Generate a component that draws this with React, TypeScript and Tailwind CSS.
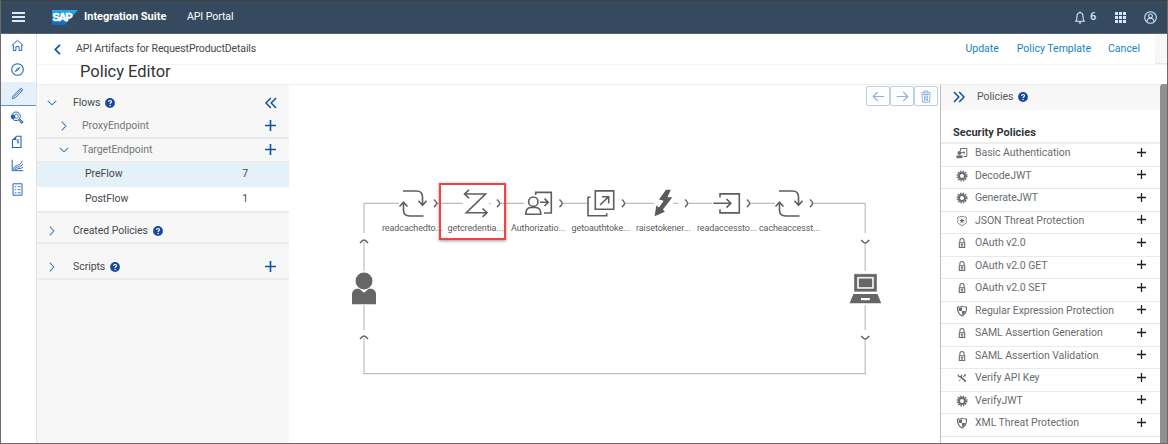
import React from "react";

type P = { className?: string };

const Svg = ({ className = "", box, children }: { className?: string; box: string; children: React.ReactNode }) => (
  <svg viewBox={box} className={className} fill="none" stroke="currentColor" strokeLinecap="butt" strokeLinejoin="miter">
    {children}
  </svg>
);

/* ---------- Shell icons ---------- */

const SapLogo = () => (
  <svg viewBox="0 0 26 15" className="h-[15px] w-[26px] shrink-0">
    <defs>
      <linearGradient id="sap" x1="0" y1="0" x2="0" y2="1">
        <stop offset="0" stopColor="#1fb0ea" />
        <stop offset="1" stopColor="#1a62bd" />
      </linearGradient>
    </defs>
    <polygon points="0,0 26,0 13,15 0,15" fill="url(#sap)" />
    <text x="0.4" y="11.3" fontFamily="Liberation Sans, Arial, sans-serif" fontWeight="700" fontSize="11" letterSpacing="-1.200" fill="#fff" stroke="#fff" strokeWidth="0.5">
      SAP
    </text>
  </svg>
);

const Bell = () => (
  <Svg box="0 0 12 13" className="h-[13px] w-[12px]">
    <path d="M1 10.2h10M2.2 10c.8-1.3.8-2.6.8-4.6C3 3.2 4.2 1.8 6 1.8S9 3.2 9 5.4c0 2 0 3.300.8 4.600M6 .4v1.400M4.800 11.900h2.400" strokeWidth="1.1" />
  </Svg>
);

const Apps = () => (
  <svg viewBox="0 0 11 11" className="h-[11px] w-[11px]" fill="currentColor">
    {[0, 4, 8].map((y) => [0, 4, 8].map((x) => <rect key={`${x}-${y}`} x={x} y={y} width="3" height="3" />))}
  </svg>
);

const User = () => (
  <Svg box="0 0 13 13" className="h-[13px] w-[13px]">
    <circle cx="6.5" cy="6.5" r="5.800" strokeWidth="1.1" />
    <circle cx="6.5" cy="4.900" r="1.900" strokeWidth="1.1" />
    <path d="M3 10.800c.2-2.500 1.600-3.600 3.500-3.600s3.300 1.100 3.500 3.600" strokeWidth="1.1" />
  </Svg>
);

const Home = () => (
  <Svg box="0 0 13 13" className="h-[13px] w-[13px]">
    <path d="M.7 6.600 6.500 1.300l5.800 5.300M2.300 5.800v5.700h2.600V7.600h3.200v3.900h2.600V5.800" strokeWidth="1" />
  </Svg>
);

const Compass = () => (
  <Svg box="0 0 13 13" className="h-[13px] w-[13px]">
    <circle cx="6.5" cy="6.5" r="5.800" strokeWidth="1.1" />
    <path d="M9.700 3.600 7.300 7.200 3.300 9.400 5.700 5.800z" fill="currentColor" stroke="none" />
    <path d="m6 6.100 1 .8" stroke="#fff" strokeWidth=".6" />
  </Svg>
);

const Pencil = () => (
  <Svg box="0 0 13 13" className="h-[13px] w-[13px]">
    <path d="m1.300 11.700.9-3L8.900 2l2.100 2.100-6.700 6.700zM7.700 3.200l2.100 2.100M9.400 1.600l.7-.5 1.900 1.900-.6.7M3 9.800l5.400-5.300" strokeWidth=".85" />
  </Svg>
);

const KeySearch = () => (
  <Svg box="0 0 14 14" className="h-[14px] w-[14px]">
    <circle cx="6" cy="5.300" r="4.300" strokeWidth="1" />
    <circle cx="6.300" cy="5.300" r="2" strokeWidth=".8" />
    <circle cx="3.100" cy="5.800" r="2.300" fill="currentColor" stroke="none" />
    <path d="m8.600 8.800 3 3.500 1.300-1.300-3.300-3.100" strokeWidth="1.100" />
  </Svg>
);

const DocMoney = () => (
  <Svg box="0 0 12 14" className="h-[14px] w-[12px]">
    <path d="M1.500 4.500V12.500h8.500V1.200H5" strokeWidth="1.1" />
    <path d="M1 5 5.300.700V5z" fill="currentColor" stroke="none" />
    <path d="M7.900 5.300c-.5-.5-2-.5-2 .4 0 1 2 .5 2 1.500 0 .9-1.500.9-2 .3M6.900 4.400v4" strokeWidth=".7" />
  </Svg>
);

const Chart = () => (
  <Svg box="0 0 13 13" className="h-[13px] w-[13px]">
    <path d="M1.200.800v10.900h11" strokeWidth="1" />
    <path d="M2 9.500 6.200 6.200l2.300-.4 3-4M2.300 10.700l4-2.700 2.500-.2 3.200-2.600M4 11l3-1.400h2.200l2.600-1.300" strokeWidth=".9" />
  </Svg>
);

const ListDoc = () => (
  <Svg box="0 0 11 13" className="h-[13px] w-[11px]">
    <path d="M1 .8h9v11.400H1z" strokeWidth="1" />
    <path d="M2.700 3.500l.6.600 1-1.200M2.700 6.500l.6.600 1-1.200M2.700 9.600l.6.600 1-1.200M5.800 3.700h2.700M5.800 6.700h2.700M5.800 9.800h2.700" strokeWidth=".9" />
  </Svg>
);

/* ---------- Small shared icons ---------- */

const ChevDown = ({ className = "" }: P) => (
  <Svg box="0 0 10 6" className={`h-[6px] w-[10px] ${className}`}>
    <path d="m.8.800 4.200 4 4.200-4" strokeWidth="1.1" />
  </Svg>
);
const ChevRight = ({ className = "" }: P) => (
  <Svg box="0 0 6 10" className={`h-[10px] w-[6px] ${className}`}>
    <path d="m.8.600 4 4.400-4 4.400" strokeWidth="1.1" />
  </Svg>
);
const DoubleChev = ({ className = "" }: P) => (
  <Svg box="0 0 12 12" className={`h-[12px] w-[12px] ${className}`}>
    <path d="M5.800.9 1 6l4.800 5.100M11 .9 6.200 6l4.800 5.100" strokeWidth="1.500" />
  </Svg>
);
const Plus = ({ className = "" }: P) => (
  <Svg box="0 0 11 11" className={className}>
    <path d="M5.500 0v11M0 5.500h11" strokeWidth="1.600" />
  </Svg>
);
const Help = () => (
  <svg viewBox="0 0 10 10" className="h-[10px] w-[10px] shrink-0">
    <circle cx="5" cy="5" r="4.900" fill="#164a9c" />
    <path d="M3.500 3.900c0-1.900 3-1.900 3-.1 0 1-1.400 1-1.400 2.200" fill="none" stroke="#fff" strokeWidth="1.1" />
    <circle cx="5.100" cy="7.500" r=".7" fill="#fff" />
  </svg>
);

/* ---------- Policy list icons ---------- */

const AuthIcon = () => (
  <Svg box="0 0 12 12" className="h-[12px] w-[12px]">
    <path d="M4.500 4V1.500h6.300v8H7.500M5 5.600h4M7.500 4.200 9 5.600 7.500 7" strokeWidth="1" />
    <circle cx="3.400" cy="6" r="1.900" fill="currentColor" stroke="none" />
    <path d="M.5 11.200V8.400h6v2.800z" fill="currentColor" stroke="none" />
  </Svg>
);
const GearIcon = () => (
  <Svg box="0 0 12 12" className="h-[12px] w-[12px]">
    <circle cx="6" cy="6" r="4.600" strokeWidth="1.900" strokeDasharray="1.350 1.059" />
    <circle cx="6" cy="6" r="3" strokeWidth="2" />
  </Svg>
);
const BadgeIcon = () => (
  <Svg box="0 0 12 12" className="h-[12px] w-[12px]">
    <path d="M2 1.800c1 .6 1.800.3 2.400-.3h3.200c.6.600 1.400.900 2.400.300l.4 1.200c-.7 2-.2 3 .1 4.200-.4 1.600-2.600 2.300-4.500 3.400-1.900-1.100-4.100-1.800-4.500-3.400.3-1.200.8-2.200.1-4.200z" strokeWidth=".8" />
    <path d="m6 3.100.8 1.700 2 .1-1.600 1.300.6 2L6 7.100 4.200 8.200l.6-2-1.600-1.300 2-.1z" fill="currentColor" stroke="none" />
  </Svg>
);
const LockIcon = () => (
  <Svg box="0 0 12 12" className="h-[12px] w-[12px]">
    <path d="M3.900 5.500V3.700c0-3 4.200-3 4.200 0v1.800" strokeWidth="1.100" />
    <path d="M3.300 5.800h5.400v4.700H3.300z" strokeWidth="1.100" />
    <path d="M6 6.500v3M4.800 7.400h2.400M4.800 9h2.400" strokeWidth=".9" />
  </Svg>
);
const ShieldIcon = () => (
  <Svg box="0 0 12 12" className="h-[12px] w-[12px]">
    <path d="M1.500 2c1.800.2 3.300-.1 4.500-.9 1.200.800 2.700 1.100 4.500.900.3 4-1 7-4.500 8.900C2.500 9 1.200 6 1.500 2z" strokeWidth="1.100" />
    <path d="M2.600 3 6 2.300V6H2.800zM6 6h3.400c-.4 1.900-1.600 3-3.400 4z" fill="currentColor" stroke="none" />
  </Svg>
);
const KeyIcon = () => (
  <Svg box="0 0 12 12" className="h-[12px] w-[12px]">
    <path d="m4.200 4.300 5.600 5.400" strokeWidth="1.700" />
    <path d="M2.500 2.400c-.6 1.300.2 2.600 1.600 2.500 1.200-.1 1.700-1.200 1.300-2.100" strokeWidth="1.300" />
    <path d="M7 5 8.400 3.700M8.900 1.900v2.600M10.200 3.200H7.600M2.800 9.200l1.700-1.600" strokeWidth=".9" />
  </Svg>
);

const policies: [string, () => React.ReactElement][] = [
  ["Basic Authentication", AuthIcon],
  ["DecodeJWT", GearIcon],
  ["GenerateJWT", GearIcon],
  ["JSON Threat Protection", BadgeIcon],
  ["OAuth v2.0", LockIcon],
  ["OAuth v2.0 GET", LockIcon],
  ["OAuth v2.0 SET", LockIcon],
  ["Regular Expression Protection", ShieldIcon],
  ["SAML Assertion Generation", LockIcon],
  ["SAML Assertion Validation", LockIcon],
  ["Verify API Key", KeyIcon],
  ["VerifyJWT", GearIcon],
  ["XML Threat Protection", ShieldIcon],
];

/* ---------- Flow diagram ---------- */

const Cycle = ({ dx }: { dx: number }) => (
  <g transform={`translate(${dx} 0)`}>
    <path d="M403 191h13.500q6 0 6 6v8M418.500 200.800l4 4.400 4-4.400M423.500 216H409.500q-6 0-6-6v-8M399.500 206.500l4-4.400 4 4.400" />
  </g>
);

const Diagram = () => (
  <svg viewBox="289 85 651 358" className="absolute top-0 left-0 h-[358px] w-[651px]" fill="none">
    <g stroke="#bdbdbd" strokeWidth="1.200">
      <path d="M364 233v-29.700h35M437 203.300h26M489 203.300h1.500M500 203.300h24M562 203.300h25M625 203.300h29M673 203.300h5M688 203.300h24M750 203.300h25M813 203.300h52.200V233" />
      <path d="M364 242v29M364 305v25M364 338v35.700h501.200V338M865.200 242v29M865.200 305v25" />
    </g>
    <g stroke="#666" strokeWidth="1.500">
      {[434, 497, 559.5, 622, 685, 747, 810].map((x) => (
        <path key={x} d={`M${x} 199.500q2.700 2.400 2.700 3.800t-2.700 3.800`} />
      ))}
      <path d="M360 243q2.500-3 4-3t4 3M360 339q2.500-3 4-3t4 3M861.200 240q2.500 3 4 3t4-3M861.200 336q2.500 3 4 3t4-3" />
    </g>
    <g stroke="#5e5e5e" strokeWidth="1.600">
      <Cycle dx={0} />
      <Cycle dx={376} />
      <path d="M469 189.800l-4.500 4.200 4.500 4.200M464.500 194H485.500L466.300 212.700H487M482.500 208.500l4.500 4.200-4.500 4.200" />
      <circle cx="533.300" cy="201.700" r="4.700" />
      <path d="M525.800 214.300c0-4.500 1.800-6.800 5-6.800h5c3.200 0 5 2.300 5 6.800z" />
      <path d="M535.700 195v-2.600h15.600V213H544M540 202.300h8M544.500 198.600l3.700 3.700-3.700 3.700" />
      <path d="M595.300 190.900h18.400v18.400h-18.400zM590.500 197.300H588v18.400h18.700v-2.500M600 205l8.700-8.300M602 196.700h6.700v6.700" />
      <path d="M720 197.500v-3.600h19.300v19H720v-3.600M713.300 203.300h17M726.500 199l4.300 4.300-4.300 4.300" />
    </g>
    <path d="M666 189.700h4.900l-3.500 7.600h5l-9.500 12.200 2 2.300-10.300 4.500 1.700-10.900 2.700 2.100 4.600-6.700-4.600-1.400z" fill="#5a5a5a" />
    <g fill="#666">
      <circle cx="364" cy="281" r="8.500" />
      <path d="M352 304.300v-10q0-4.500 4.500-5.500h2.700l4.800 4 4.800-4h2.700q4.500 1 4.500 5.500v10z" />
      <path d="M854.500 274.300h22v17h-22zM856.900 276.700v12.300h17.200v-12.300z" fillRule="evenodd" stroke="#666" strokeWidth=".6" />
      <path d="M858.800 278.500h13.400v8.700h-13.400z" />
      <path d="M853.500 294h24l3.700 9.200h-31.700z" />
      <path d="M861 298h8.800v2.200H861z" fill="#fff" />
    </g>
  </svg>
);

const labels: [string, string][] = [
  ["readcachedto...", "left-[93px]"],
  ["getcredentia...", "left-[158.500px]"],
  ["Authorizatio...", "left-[222px]"],
  ["getoauthtoke...", "left-[282.500px]"],
  ["raisetokener...", "left-[347px]"],
  ["readaccessto...", "left-[408px]"],
  ["cacheaccesst...", "left-[470px]"],
];

const ArrowBtn = ({ flip }: { flip?: boolean }) => (
  <Svg box="0 0 13 11" className={`h-[11px] w-[13px] ${flip ? "rotate-180" : ""}`}>
    <path d="M12.200 5.500H1.200M5.700 1 1.200 5.500l4.500 4.500" strokeWidth="1.200" />
  </Svg>
);

const btn = "flex h-5 w-[24px] items-center justify-center rounded-[2px] border border-[#b9d0e8] text-[#8fb2d9]";

const nav = [Home, Compass, Pencil, KeySearch, DocMoney, Chart, ListDoc];

export default function App() {
  return (
    <div className="flex h-[444px] w-[1168px] flex-col overflow-hidden border border-t-[#404040] border-r-[#6b6b6b] border-b-[#6b6b6b] border-l-[#6b6b6b] bg-white font-['Roboto','Noto_Sans',sans-serif] text-[10.5px] leading-[14px] tracking-[-0.05px] text-[#45484b]">
      <header className="flex h-[33px] shrink-0 items-center border-b border-[#54677c] bg-[#354a5f] text-white">
        <div className="ml-[11px] flex w-[13px] flex-col gap-[2.500px]">
          {[0, 1, 2].map((i) => (
            <div key={i} className="h-[1.500px] bg-[#dbe8f5]" />
          ))}
        </div>
        <div className="ml-[27px] flex">
          <SapLogo />
        </div>
        <div className="ml-[6px] w-[103px] text-[11px] font-bold tracking-[0]">Integration Suite</div>
        <div className="text-[10.5px]">API Portal</div>
        <div className="ml-auto flex items-center text-[#d1e8ff]">
          <Bell />
          <span className="ml-[4px] w-[25px] text-[11px] font-medium">6</span>
          <Apps />
          <span className="mr-[10px] ml-[18px]">
            <User />
          </span>
        </div>
      </header>

      <div className="flex min-h-0 flex-1">
        <nav className="flex w-[36px] shrink-0 flex-col border-r border-[#e2e2e2] text-[#2666b0]">
          {nav.map((Icon, i) => (
            <div
              key={i}
              className={`flex h-6 shrink-0 items-center justify-center pr-[3px] pb-px ${i === 2 ? "border-b border-[#5f94cb] bg-[#e5f0fa]" : ""}`}
            >
              <Icon />
            </div>
          ))}
        </nav>

        <div className="flex min-w-0 flex-1 flex-col">
          <div className="flex h-[31px] shrink-0 items-center border-b border-[#f3f3f3]">
            <Svg box="0 0 7 11" className="ml-[17px] h-[11px] w-[7px] text-[#0854a0]">
              <path d="M6 .8 1.300 5.500 6 10.200" strokeWidth="1.700" />
            </Svg>
            <span className="ml-[15px] tracking-[-0.12px]">API Artifacts for RequestProductDetails</span>
            <div className="ml-auto flex h-full items-center tracking-[0] text-[#1583c6]">
              <span className="mr-[18px]">Update</span>
              <span className="mr-[17px]">Policy Template</span>
              <span className="mr-[15px]">Cancel</span>
              <span className="h-full w-[12px] border-b border-[#e8e8e8] bg-[#f7f7f7]" />
            </div>
          </div>
          <h1 className="h-[19px] shrink-0 pl-[43px] text-[16.5px] leading-[14px] tracking-[-0.03px] text-[#32363a]">Policy Editor</h1>

          <div className="flex min-h-0 flex-1">
            <aside className="flex w-[252px] shrink-0 flex-col border-t border-[#ededed] bg-[#f7f7f7]">
              <div className="flex h-[30px] shrink-0 items-center pt-[5px] pr-[12px] pl-[10px]">
                <ChevDown className="text-[#3f7fc0]" />
                <span className="mr-[5px] ml-[16px]">Flows</span>
                <Help />
                <DoubleChev className="ml-auto text-[#0854a0]" />
              </div>
              <div className="flex h-[24px] shrink-0 items-center border-b-2 border-[#ebebeb] pr-[13px] pb-px pl-[24px] text-[#74777a]">
                <ChevRight className="text-[#3f7fc0]" />
                <span className="ml-[15px]">ProxyEndpoint</span>
                <Plus className="ml-auto h-[11px] w-[11px] text-[#0854a0]" />
              </div>
              <div className="flex h-[24px] shrink-0 items-center border-b-2 border-[#ebebeb] pr-[13px] pb-px pl-[22px] text-[#74777a]">
                <ChevDown className="text-[#3f7fc0]" />
                <span className="ml-[13px]">TargetEndpoint</span>
                <Plus className="ml-auto h-[11px] w-[11px] text-[#0854a0]" />
              </div>
              <div className="flex h-[24px] shrink-0 items-center justify-between bg-[#e5f1f9] pr-[41px] pb-[2px] pl-[48px]">
                <span>PreFlow</span>
                <span>7</span>
              </div>
              <div className="flex h-[26px] shrink-0 items-center justify-between border-b-2 border-[#ebebeb] bg-white pr-[41px] pb-px pl-[48px]">
                <span>PostFlow</span>
                <span>1</span>
              </div>
              <div className="flex h-[31px] shrink-0 items-center border-b-2 border-[#ebebeb] pt-[6px] pl-[12px]">
                <ChevRight className="text-[#3f7fc0]" />
                <span className="mr-[5px] ml-[18px]">Created Policies</span>
                <Help />
              </div>
              <div className="flex h-[36px] shrink-0 items-center border-b-2 border-[#ebebeb] pt-[11px] pr-[13px] pl-[12px]">
                <ChevRight className="text-[#3f7fc0]" />
                <span className="mr-[5px] ml-[18px]">Scripts</span>
                <Help />
                <Plus className="ml-auto h-[11px] w-[11px] text-[#0854a0]" />
              </div>
            </aside>

            <main className="relative w-[651px] shrink-0 border-t border-[#ededed]">
              <div className="flex justify-end pt-px pr-[2px]">
                <div className={btn}><ArrowBtn /></div>
                <div className={btn}><ArrowBtn flip /></div>
                <div className={btn}>
                  <Svg box="0 0 12 13" className="h-[13px] w-[12px]">
                    <path d="M.8 2.800h10.400M4 2.500V1h4v1.500M2 4.500l.5 7.700h7L10 4.500zM4.600 5.500v5.500M6 5.500v5.500M7.400 5.500v5.500" strokeWidth="1" />
                  </Svg>
                </div>
              </div>
              <Diagram />
              {labels.map(([t, c]) => (
                <span key={t} className={`absolute top-[136px] text-[9px] leading-[14px] tracking-[-0.1px] whitespace-nowrap text-[#5c5c5c] ${c}`}>
                  {t}
                </span>
              ))}
              <div className="absolute top-[98px] left-[150px] h-[57px] w-[67px] border-2 border-[#ef4444] shadow-[0_1px_3px_rgba(0,0,0,0.4)]" />
            </main>

            <aside className="flex min-w-0 flex-1 flex-col border-t border-l border-t-[#ededed] border-l-[#bdbdbd] text-[#6a6d70]">
              <div className="flex h-[25px] shrink-0 items-center bg-[#f7f7f7] pb-px pl-[12px] text-[#55585b]">
                <DoubleChev className="rotate-180 text-[#0854a0]" />
                <span className="mr-[5px] ml-[12px]">Policies</span>
                <Help />
              </div>
              <div className="h-[34px] shrink-0 border-b-2 border-[#ededed] pt-[15.500px] pl-[12px] text-[11px] font-bold tracking-[0] text-[#32363a]">
                Security Policies
              </div>
              {policies.map(([name, Icon]) => (
                <div key={name} className="flex h-[22.500px] shrink-0 items-center border-b border-[#e9e9e9] pr-[14px] pb-[3px] pl-[15px]">
                  <Icon />
                  <span className="ml-[7px]">{name}</span>
                  <Plus className="ml-auto h-[9px] w-[9px] -translate-y-[1px] text-[#222]" />
                </div>
              ))}
            </aside>
            <div className="w-[7px] shrink-0 rounded-tl-[3px] bg-[#8f8f8f]" />
          </div>
        </div>
      </div>
    </div>
  );
}
